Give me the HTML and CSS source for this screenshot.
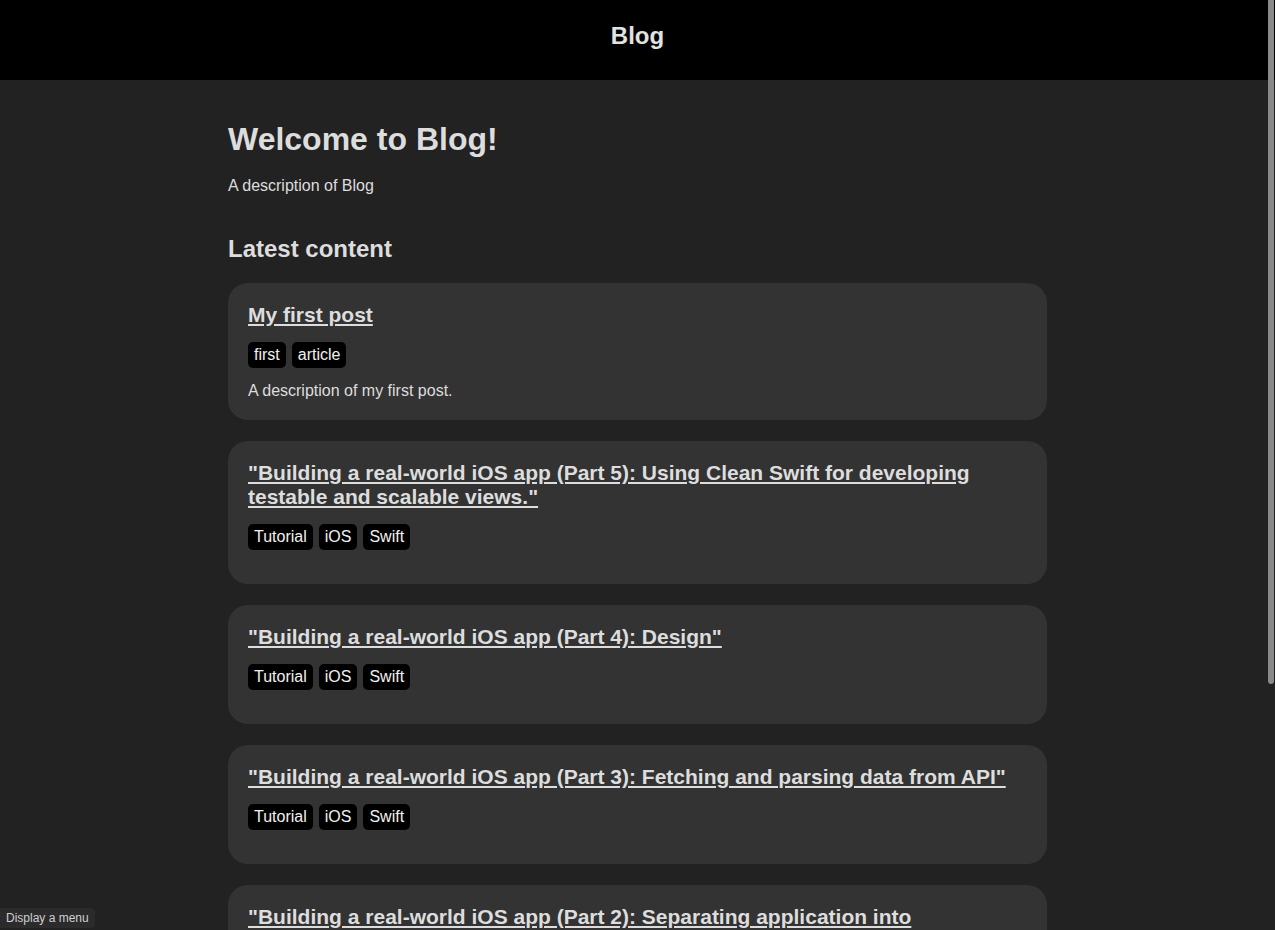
FILE: index.html
```html
<!DOCTYPE html>
<html lang="en">
<head>
<meta charset="utf-8">
<title>Blog</title>
<link rel="stylesheet" href="styles.css">
</head>
<body>
<header class="site-header">
  <a class="site-title" href="#">Blog</a>
</header>
<main class="content">
  <h1 class="page-title">Welcome to Blog!</h1>
  <p class="page-desc">A description of Blog</p>
  <h2 class="section-title">Latest content</h2>
  <ul class="post-list">
    <li class="post-card">
      <h3 class="post-title"><a href="#">My first post</a></h3>
      <ul class="tags"><li class="tag">first</li><li class="tag">article</li></ul>
      <p class="post-desc">A description of my first post.</p>
    </li>
    <li class="post-card">
      <h3 class="post-title"><a href="#">"Building a real-world iOS app (Part 5): Using Clean Swift for developing testable and scalable views."</a></h3>
      <ul class="tags"><li class="tag">Tutorial</li><li class="tag">iOS</li><li class="tag">Swift</li></ul>
      <p class="post-desc"></p>
    </li>
    <li class="post-card">
      <h3 class="post-title"><a href="#">"Building a real-world iOS app (Part 4): Design"</a></h3>
      <ul class="tags"><li class="tag">Tutorial</li><li class="tag">iOS</li><li class="tag">Swift</li></ul>
      <p class="post-desc"></p>
    </li>
    <li class="post-card">
      <h3 class="post-title"><a href="#">"Building a real-world iOS app (Part 3): Fetching and parsing data from API"</a></h3>
      <ul class="tags"><li class="tag">Tutorial</li><li class="tag">iOS</li><li class="tag">Swift</li></ul>
      <p class="post-desc"></p>
    </li>
    <li class="post-card">
      <h3 class="post-title"><a href="#">"Building a real-world iOS app (Part 2): Separating application into components."</a></h3>
      <ul class="tags"><li class="tag">Tutorial</li><li class="tag">iOS</li><li class="tag">Swift</li></ul>
      <p class="post-desc"></p>
    </li>
  </ul>
</main>
<div class="status-tip">Display a menu</div>
<div class="scroll-thumb"></div>
</body>
</html>
```

FILE: styles.css
```css
html {
  scrollbar-width: none;
}
html::-webkit-scrollbar {
  display: none;
}
body {
  margin: 0;
  background: #222222;
  color: #dddddd;
  font-family: "Liberation Sans", Arial, Helvetica, sans-serif;
  font-size: 16px;
  line-height: 18px;
}
a {
  color: inherit;
}
.site-header {
  background: #000000;
  height: 80px;
  box-sizing: border-box;
  padding-top: 22px;
  display: flex;
  justify-content: center;
}
.site-title {
  font-size: 24px;
  line-height: 28px;
  font-weight: bold;
  color: #e2e2e2;
  text-decoration: none;
}
.content {
  max-width: 819px;
  margin: 0 auto;
  padding-top: 40px;
}
.page-title {
  font-size: 32px;
  line-height: 38px;
  font-weight: bold;
  margin: 0 0 19px;
  color: #dddddd;
}
.page-desc {
  margin: 0;
}
.section-title {
  font-size: 24px;
  line-height: 28px;
  font-weight: bold;
  margin: 40px 0 20px;
}
.post-list {
  list-style: none;
  margin: 0;
  padding: 0;
  display: flex;
  flex-direction: column;
  gap: 21px;
}
.post-card {
  background: #333333;
  border-radius: 20px;
  padding: 20px;
}
.post-title {
  margin: 0;
  font-size: 21px;
  line-height: 24px;
  font-weight: bold;
}
.post-title a {
  text-decoration: underline;
  color: #dddddd;
}
.tags {
  list-style: none;
  margin: 15px 0 0;
  padding: 0;
  display: flex;
  gap: 6px;
}
.tag {
  background: #000000;
  color: #f0f0f0;
  border-radius: 5px;
  padding: 4px 6px;
  line-height: 18px;
}
.post-desc {
  margin: 14px 0 0;
}
.status-tip {
  position: fixed;
  left: 0;
  bottom: 2px;
  background: #2b2b2b;
  color: #cfcfcf;
  font-size: 12px;
  line-height: 14px;
  padding: 3px 6px;
  border-radius: 0 4px 4px 0;
}
.scroll-thumb {
  position: fixed;
  right: 1px;
  top: 0;
  width: 6px;
  height: 684px;
  background: #8a8a8a;
  border-radius: 0 0 3px 3px;
}
```
